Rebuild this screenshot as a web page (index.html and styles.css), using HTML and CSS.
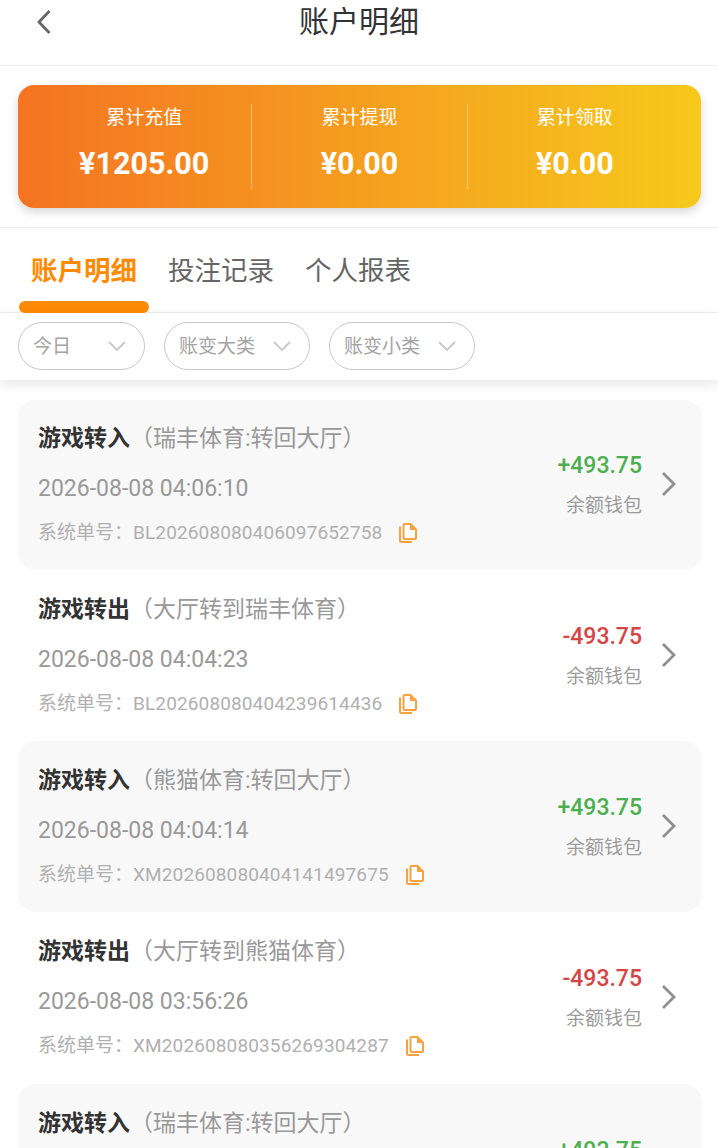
FILE: index.html
```html
<!DOCTYPE html>
<html lang="zh">
<head>
<meta charset="utf-8">
<title>账户明细</title>
<link rel="stylesheet" href="styles.css">
</head>
<body>
<svg class="defs" width="0" height="0" aria-hidden="true">
  <symbol id="copy" viewBox="0 0 18 20">
    <path d="M1 3.500V17.500a1.500 1.500 0 0 0 1.500 1.500H13" fill="none" stroke="#f6a240" stroke-width="2"/>
    <path d="M5.500 1H11.500L17 6.500V15a1 1 0 0 1-1 1H5.500a1 1 0 0 1-1-1V2a1 1 0 0 1 1-1z" fill="#fff" stroke="#f6a240" stroke-width="2"/>
    <path d="M11 1l6 6h-6z" fill="#f6a240"/>
  </symbol>
  <symbol id="chev" viewBox="0 0 18 26">
    <path d="M3 2l11 11L3 24" fill="none" stroke="#8f8f8f" stroke-width="2.800"/>
  </symbol>
  <symbol id="down" viewBox="0 0 20 12">
    <path d="M2 2l8 8 8-8" fill="none" stroke="#c8c8c8" stroke-width="1.800"/>
  </symbol>
</svg>
<header class="topbar">
  <svg class="back" viewBox="0 0 16 26" width="16" height="26" aria-hidden="true"><path d="M13.500 2L3 13l10.500 11" fill="none" stroke="#666" stroke-width="2.800"/></svg>
  <h1 class="title">账户明细</h1>
</header>
<section class="summary-wrap">
  <div class="summary">
    <div class="stat"><div class="stat-label">累计充值</div><div class="stat-value">¥1205.00</div></div>
    <div class="stat"><div class="stat-label">累计提现</div><div class="stat-value">¥0.00</div></div>
    <div class="stat"><div class="stat-label">累计领取</div><div class="stat-value">¥0.00</div></div>
  </div>
</section>
<nav class="tabs">
  <a class="tab tab-active">账户明细</a>
  <a class="tab">投注记录</a>
  <a class="tab">个人报表</a>
</nav>
<div class="filters">
  <div class="filter filter-short"><span>今日</span><svg width="20" height="12"><use href="#down"/></svg></div>
  <div class="filter"><span>账变大类</span><svg width="20" height="12"><use href="#down"/></svg></div>
  <div class="filter"><span>账变小类</span><svg width="20" height="12"><use href="#down"/></svg></div>
</div>
<main class="list">
  <article class="row row-alt">
    <div class="row-main">
      <div class="row-title"><b>游戏转入</b><span class="row-sub">（瑞丰体育:转回大厅）</span></div>
      <div class="row-date">2026-08-08 04:06:10</div>
      <div class="row-order"><span>系统单号：</span><span class="order-no">BL202608080406097652758</span><svg class="copy" width="18" height="20"><use href="#copy"/></svg></div>
    </div>
    <div class="row-side"><div class="amount plus">+493.75</div><div class="wallet">余额钱包</div></div>
    <svg class="chev" width="18" height="26"><use href="#chev"/></svg>
  </article>
  <article class="row">
    <div class="row-main">
      <div class="row-title"><b>游戏转出</b><span class="row-sub">（大厅转到瑞丰体育）</span></div>
      <div class="row-date">2026-08-08 04:04:23</div>
      <div class="row-order"><span>系统单号：</span><span class="order-no">BL202608080404239614436</span><svg class="copy" width="18" height="20"><use href="#copy"/></svg></div>
    </div>
    <div class="row-side"><div class="amount minus">-493.75</div><div class="wallet">余额钱包</div></div>
    <svg class="chev" width="18" height="26"><use href="#chev"/></svg>
  </article>
  <article class="row row-alt">
    <div class="row-main">
      <div class="row-title"><b>游戏转入</b><span class="row-sub">（熊猫体育:转回大厅）</span></div>
      <div class="row-date">2026-08-08 04:04:14</div>
      <div class="row-order"><span>系统单号：</span><span class="order-no">XM202608080404141497675</span><svg class="copy" width="18" height="20"><use href="#copy"/></svg></div>
    </div>
    <div class="row-side"><div class="amount plus">+493.75</div><div class="wallet">余额钱包</div></div>
    <svg class="chev" width="18" height="26"><use href="#chev"/></svg>
  </article>
  <article class="row">
    <div class="row-main">
      <div class="row-title"><b>游戏转出</b><span class="row-sub">（大厅转到熊猫体育）</span></div>
      <div class="row-date">2026-08-08 03:56:26</div>
      <div class="row-order"><span>系统单号：</span><span class="order-no">XM202608080356269304287</span><svg class="copy" width="18" height="20"><use href="#copy"/></svg></div>
    </div>
    <div class="row-side"><div class="amount minus">-493.75</div><div class="wallet">余额钱包</div></div>
    <svg class="chev" width="18" height="26"><use href="#chev"/></svg>
  </article>
  <article class="row row-alt row-last">
    <div class="row-main">
      <div class="row-title"><b>游戏转入</b><span class="row-sub">（瑞丰体育:转回大厅）</span></div>
    </div>
    <div class="row-side"><div class="amount plus">+493.75</div></div>
  </article>
</main>
</body>
</html>
```
FILE: styles.css
```css
* { box-sizing: border-box; }
html, body { margin: 0; padding: 0; }
body {
  width: 718px;
  height: 1148px;
  overflow: hidden;
  background: #fff;
  font-family: Roboto, "Noto Sans CJK SC", sans-serif;
}
.defs { display: block; height: 0; }
.topbar {
  height: 66px;
  border-bottom: 1px solid #ececec;
  display: flex;
  justify-content: center;
  padding-top: 1px;
  position: relative;
}
.back { position: absolute; left: 36px; top: 9px; }
.title {
  margin: 0;
  font-size: 30px;
  line-height: 42px;
  font-weight: 400;
  color: #333;
}
.summary-wrap {
  height: 162px;
  padding: 19px 17px 0 18px;
  border-bottom: 1px solid #ececec;
}
.summary {
  height: 123px;
  border-radius: 16px;
  background: linear-gradient(90deg, #f57322, #f6c91c);
  box-shadow: 0 4px 10px rgba(0, 0, 0, .16);
  display: flex;
  padding: 19px 19px;
}
.stat {
  flex: 1;
  text-align: center;
  color: #fff;
  border-left: 1px solid rgba(255, 255, 255, .4);
}
.stat:first-child { border-left: 0; }
.stat-label { font-size: 19px; line-height: 28px; }
.stat-value { margin-top: 12px; font-size: 30.500px; line-height: 40px; font-weight: 700; }
.tabs {
  height: 85px;
  border-bottom: 1px solid #f0f0f0;
  display: flex;
  gap: 31px;
  padding: 24px 0 0 31px;
  position: relative;
}
.tab {
  font-size: 26.500px;
  line-height: 38px;
  color: #666;
}
.tab-active { color: #ff8a05; font-weight: 700; position: relative; }
.tab-active::after {
  content: "";
  position: absolute;
  left: -12px;
  top: 49px;
  width: 130px;
  height: 12px;
  border-radius: 6px;
  background: #ff8a05;
}
.filters {
  height: 67px;
  padding: 9px 0 0 18px;
  display: flex;
  gap: 19px;
  position: relative;
  background: #fff;
  box-shadow: 0 4px 12px rgba(0, 0, 0, .1);
}
.filter {
  width: 146px;
  height: 48px;
  border: 1px solid #c8c8c8;
  border-radius: 24px;
  display: flex;
  align-items: center;
  justify-content: space-between;
  padding: 0 17px 3px 14px;
  font-size: 19px;
  color: #a3a3a3;
}
.filter svg { margin-top: 3px; }
.filter-short { width: 127px; }
.list { padding: 20px 16px 0 18px; }
.row {
  height: 171px;
  border-radius: 18px;
  padding: 23px 24px 0 20px;
  display: flex;
  align-items: flex-start;
}
.row:first-child { height: 170px; padding-top: 22px; }
.row-alt { background: #f8f8f8; }
.row-last { margin-top: 1px; padding-right: 60px; }
.row-main { flex: 1; min-width: 0; }
.row-title { font-size: 23px; line-height: 34px; color: #999; white-space: nowrap; }
.row-title b { color: #333; font-weight: 700; }
.row-date { margin-top: 17px; font-size: 23px; line-height: 32px; color: #999; }
.row-order {
  margin-top: 14px;
  font-size: 19px;
  line-height: 28px;
  color: #b0b0b0;
  display: flex;
  align-items: center;
}
.order-no { letter-spacing: .13px; }
.copy { margin-left: 17px; }
.row-side { text-align: right; margin-top: 27px; }
.amount { font-size: 23px; line-height: 34px; font-weight: 500; }
.plus { color: #4caf50; }
.minus { color: #d64545; }
.wallet { margin-top: 9px; font-size: 19px; line-height: 28px; color: #9b9b9b; }
.chev { margin: 49px 0 0 18px; }
```
